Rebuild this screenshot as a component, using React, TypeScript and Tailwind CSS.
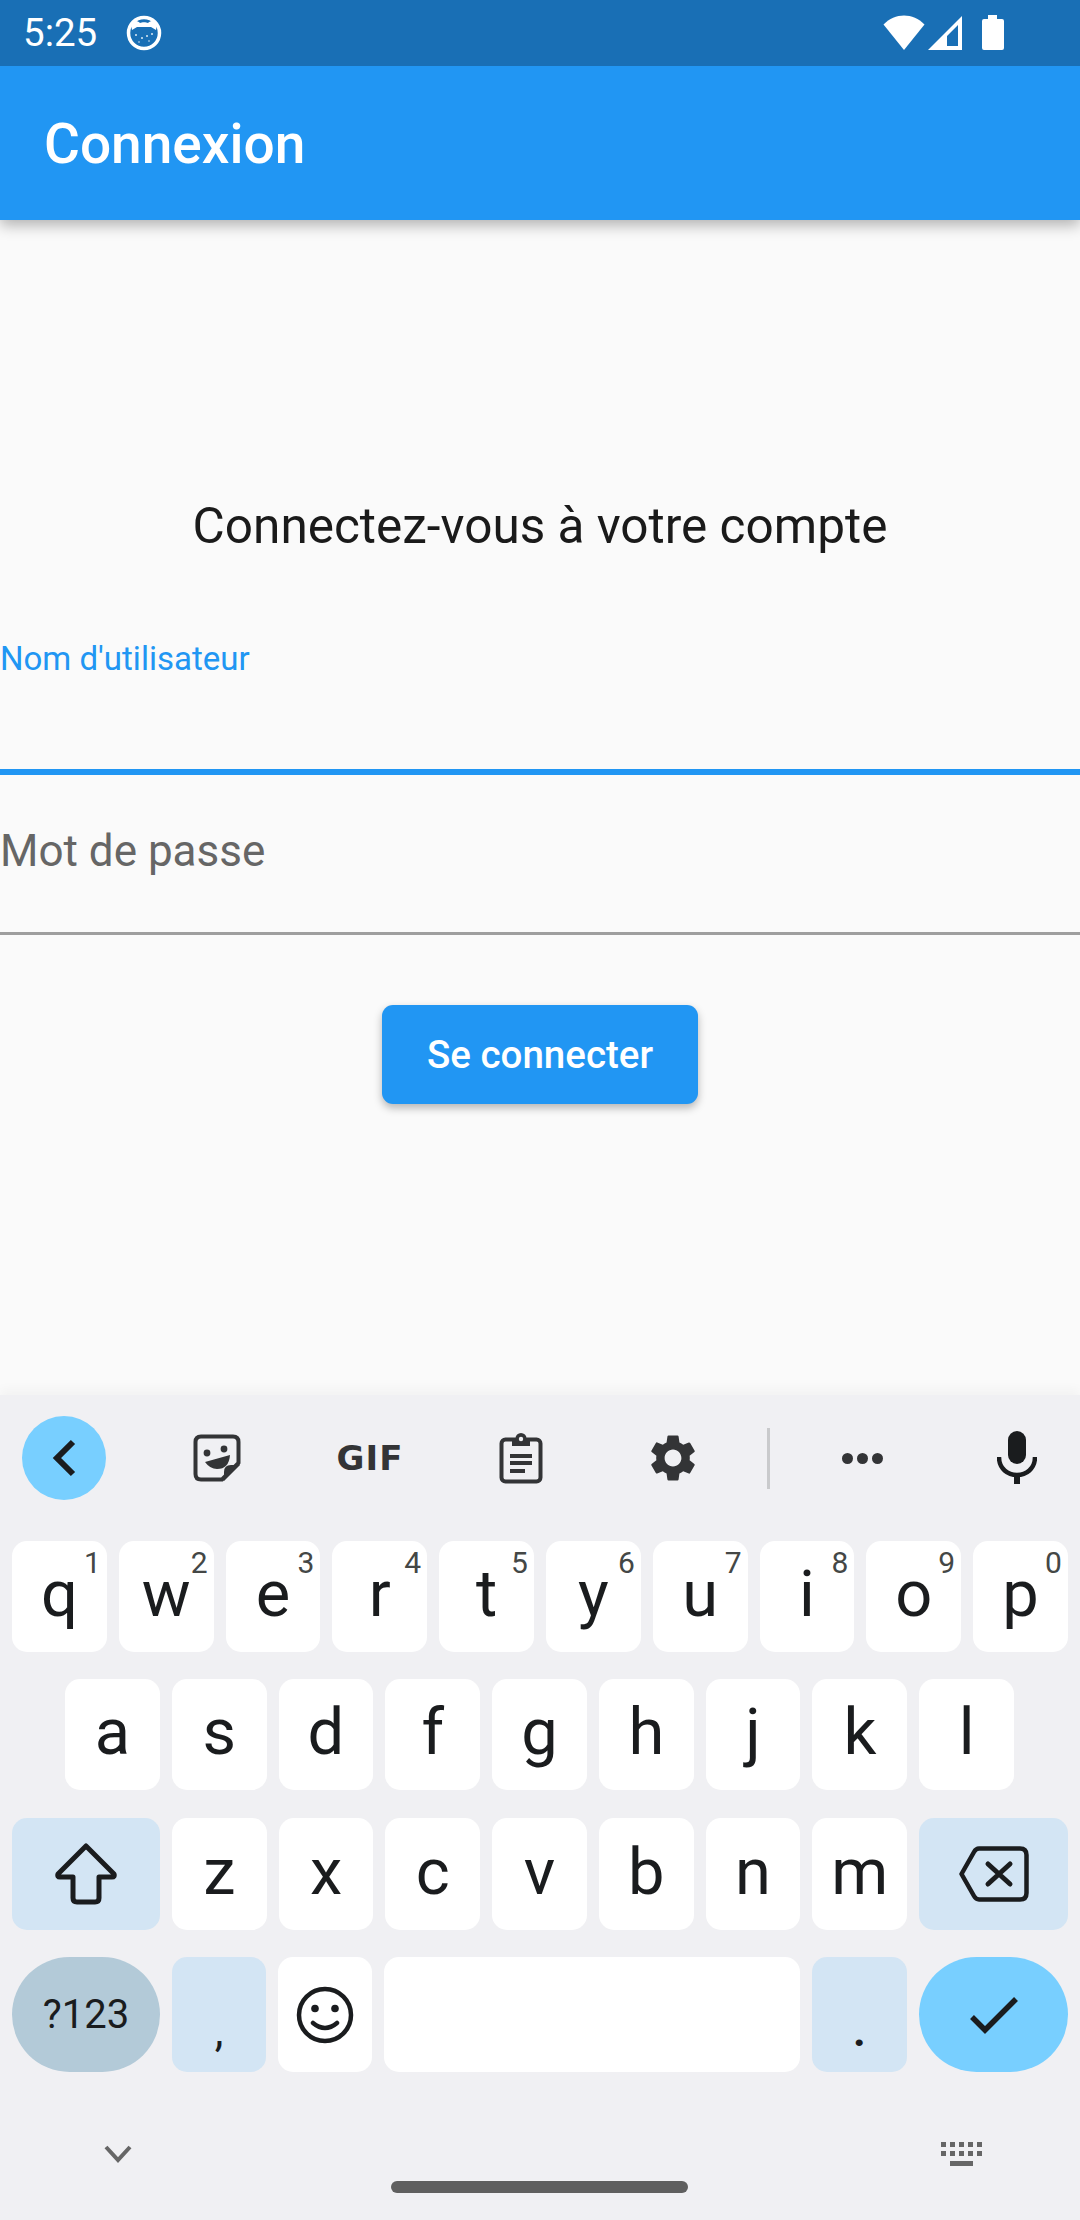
import React from "react";

const font = { fontFamily: "Roboto, sans-serif" };

function Key({ label, sup, className = "" }: { label?: string; sup?: string; className?: string }) {
  return (
    <div className={`relative flex-1 h-full rounded-[15px] bg-white flex items-center justify-center text-[65px] leading-none text-[#1a1c1e] ${className}`}>
      <span className="relative -top-[2px]">{label}</span>
      {sup && <span className="absolute right-[6px] top-[6px] text-[30px] leading-[32px] text-[#444746]">{sup}</span>}
    </div>
  );
}

function CatIcon() {
  return (
    <svg width="36" height="36" viewBox="0 0 36 36">
      <circle cx="18" cy="18" r="15.5" fill="none" stroke="#fff" strokeWidth="3.5" />
      <path d="M5 10 C9 4 12 6 14 8 C16 7 20 7 22 8 C24 6 27 4 31 10 L30 15 L25 12 L11 12 L6 15 Z" fill="#fff" />
      <g fill="#fff" opacity="0.85">
        <circle cx="10" cy="20" r="1" /><circle cx="16" cy="23" r="1" /><circle cx="21" cy="21" r="1" />
        <circle cx="26" cy="19" r="1" /><circle cx="13" cy="27" r="0.8" /><circle cx="23" cy="26" r="0.8" />
      </g>
    </svg>
  );
}

function StatusIcons() {
  return (
    <div className="flex items-center gap-[3px] mr-[76px]">
      <svg width="42" height="36" viewBox="0 0 42 36">
        <path d="M0.5 9.5 C12 -2.5 30 -2.5 41.5 9.5 L21 35 Z" fill="#fff" />
      </svg>
      <svg width="35" height="36" viewBox="0 0 35 36" className="mr-[16px]">
        <path fillRule="evenodd" d="M0 35 L34 1 V35 Z M19 31 H30 V10 L19 21 Z" fill="#fff" />
      </svg>
      <svg width="22" height="36" viewBox="0 0 22 36">
        <path d="M6 0 H15 V4 H20 Q22 4 22 6 V33 Q22 35 20 35 H2 Q0 35 0 33 V6 Q0 4 2 4 H6 Z" fill="#fff" />
      </svg>
    </div>
  );
}

function Sticker() {
  return (
    <svg width="48" height="48" viewBox="0 0 48 48" className="text-[#333436]">
      <path d="M29 45.5 H8 Q2.5 45.5 2.5 40 V8 Q2.5 2.5 8 2.5 H40 Q45.5 2.5 45.5 8 V29 Z" fill="none" stroke="currentColor" strokeWidth="4" strokeLinejoin="round" />
      <path d="M47 31 L31 47 V38 Q31 31 38 31 Z" fill="currentColor" />
      <circle cx="14" cy="19" r="3.4" fill="currentColor" />
      <circle cx="31" cy="15" r="3.4" fill="currentColor" />
      <path d="M12 28 L37 21 Q36 35 24 35 Q17 35 12 28 Z" fill="currentColor" />
    </svg>
  );
}

function Clipboard() {
  return (
    <svg width="44" height="52" viewBox="0 0 44 52" className="text-[#333436]">
      <rect x="2.5" y="7.5" width="39" height="42" rx="4" fill="none" stroke="currentColor" strokeWidth="4" />
      <path d="M13 9 H31 V14 H13 Z" fill="currentColor" />
      <circle cx="22" cy="6.5" r="5.5" fill="currentColor" />
      <circle cx="22" cy="7" r="2.2" fill="#f0f0f3" />
      <path d="M11 22 H33 V26 H11 Z M11 29 H33 V33 H11 Z M11 37 H26 V41 H11 Z" fill="currentColor" />
    </svg>
  );
}

function Gear() {
  return (
    <svg width="56" height="56" viewBox="0 0 24 24" fill="#333436">
      <path d="M19.14 12.94c.04-.3.06-.61.06-.94 0-.32-.02-.64-.07-.94l2.03-1.58c.18-.14.23-.41.12-.61l-1.92-3.32c-.12-.22-.37-.29-.59-.22l-2.39.96c-.5-.38-1.03-.7-1.62-.94l-.36-2.54c-.04-.24-.24-.41-.48-.41h-3.84c-.24 0-.43.17-.47.41l-.36 2.54c-.59.24-1.13.57-1.62.94l-2.39-.96c-.22-.08-.47 0-.59.22L2.74 8.87c-.12.21-.08.47.12.61l2.03 1.58c-.05.3-.09.63-.09.94s.02.64.07.94l-2.03 1.58c-.18.14-.23.41-.12.61l1.92 3.32c.12.22.37.29.59.22l2.39-.96c.5.38 1.03.7 1.62.94l.36 2.54c.05.24.24.41.48.41h3.84c.24 0 .44-.17.47-.41l.36-2.54c.59-.24 1.13-.56 1.62-.94l2.39.96c.22.08.47 0 .59-.22l1.92-3.32c.12-.22.07-.47-.12-.61l-2.01-1.58zM12 15.6c-1.98 0-3.6-1.62-3.6-3.6s1.62-3.6 3.6-3.6 3.6 1.62 3.6 3.6-1.62 3.6-3.6 3.6z" />
    </svg>
  );
}

function Mic() {
  return (
    <svg width="40" height="54" viewBox="0 0 40 54" fill="none">
      <rect x="11" y="0" width="18" height="33" rx="9" fill="#1a1c1e" />
      <path d="M2 26 C2 50 38 50 38 26" stroke="#1a1c1e" strokeWidth="4.5" />
      <path d="M20 42 V53" stroke="#1a1c1e" strokeWidth="6" />
    </svg>
  );
}

function Shift() {
  return (
    <svg width="64" height="62" viewBox="0 0 64 62" fill="none">
      <path d="M32 3 L60 31 Q61 34 58 34 H45 V55 Q45 59 41 59 H23 Q19 59 19 55 V34 H6 Q3 34 4 31 Z" stroke="#1a1c1e" strokeWidth="5" strokeLinejoin="round" />
    </svg>
  );
}

function Backspace() {
  return (
    <svg width="70" height="56" viewBox="0 0 70 56" fill="none">
      <path d="M20 2.5 H61 Q67.5 2.5 67.5 9 V47 Q67.5 53.5 61 53.5 H20 Q17 53.5 15 50 L2.5 28 L15 6 Q17 2.5 20 2.5 Z" stroke="#1a1c1e" strokeWidth="4.5" strokeLinejoin="round" />
      <path d="M29 18 L51 38 M51 18 L29 38" stroke="#1a1c1e" strokeWidth="5" strokeLinecap="round" />
    </svg>
  );
}

function Smile() {
  return (
    <svg width="58" height="58" viewBox="0 0 58 58" fill="none">
      <circle cx="29" cy="29" r="26" stroke="#1a1c1e" strokeWidth="4.5" />
      <circle cx="19" cy="22.5" r="3.8" fill="#1a1c1e" />
      <circle cx="39" cy="22.5" r="3.8" fill="#1a1c1e" />
      <path d="M17 37 Q29 47 41 37" stroke="#1a1c1e" strokeWidth="4.5" strokeLinecap="round" />
    </svg>
  );
}

function KeyboardGlyph() {
  return (
    <svg width="42" height="26" viewBox="0 0 42 24" fill="#666">
      <path d="M0 0h5v5H0zM9 0h5v5H9zM18 0h5v5h-5zM27 0h5v5h-5zM36 0h5v5h-5zM0 9h5v5H0zM9 9h5v5H9zM18 9h5v5h-5zM27 9h5v5h-5zM36 9h5v5h-5zM9 19h23v5H9z" />
    </svg>
  );
}

export default function App() {
  return (
    <div className="w-[1080px] h-[2220px] flex flex-col overflow-hidden bg-[#fafafa]" style={font}>
      <div className="h-[66px] shrink-0 bg-[#196fb5] flex items-center justify-between pl-[23px] pr-0 relative z-20">
        <div className="flex items-center">
          <span className="text-[38.5px] leading-none text-white">5:25</span>
          <span className="ml-[29px] flex"><CatIcon /></span>
        </div>
        <StatusIcons />
      </div>

      <header className="h-[154px] shrink-0 bg-[#2196f3] flex items-center pl-[44px] relative z-10 shadow-[0_5px_14px_rgba(0,0,0,0.3)]">
        <h1 className="text-[55px] font-medium leading-none text-white relative top-[1px]">Connexion</h1>
      </header>

      <main className="h-[1175px] shrink-0 flex flex-col">
        <p className="mt-[277px] text-center text-[49.5px] leading-[58px] text-[#1a1a1a]">Connectez-vous à votre compte</p>
        <label className="mt-[84px] text-[33px] leading-[40px] text-[#2196f3]">Nom d'utilisateur</label>
        <div className="mt-[90px] h-[6px] bg-[#2196f3]" />
        <label className="mt-[50px] text-[44px] leading-[52px] text-[#666666]">Mot de passe</label>
        <div className="mt-[55px] h-[3px] bg-[#9e9e9e]" />
        <button className="mt-[70px] self-center w-[316px] h-[99px] rounded-[11px] bg-[#2196f3] text-white text-[38.5px] font-medium shadow-[0_4px_8px_rgba(0,0,0,0.28)]">
          Se connecter
        </button>
      </main>

      <section className="flex-1 flex flex-col bg-[#f0f0f3] relative shadow-[0_-6px_10px_rgba(0,0,0,0.03)]">
        <div className="h-[146px] flex items-center pb-[20px] text-[#333436]">
          <div className="w-[128px] flex justify-center">
            <div className="w-[84px] h-[84px] rounded-full bg-[#78cfff] flex items-center justify-center">
              <svg width="26" height="38" viewBox="0 0 26 38" fill="none">
                <path d="M22 3 L6 19 L22 35" stroke="#1a1c1e" strokeWidth="6" />
              </svg>
            </div>
          </div>
          <div className="w-[48px] ml-[65px] flex justify-center"><Sticker /></div>
          <div className="w-[80px] ml-[89px] flex justify-center text-[34px] font-black leading-none tracking-[1px] text-[#333436]" style={{ fontFamily: "'DejaVu Sans', sans-serif" }}>GIF</div>
          <div className="w-[44px] ml-[89px] flex justify-center"><Clipboard /></div>
          <div className="w-[56px] ml-[102px] flex justify-center"><Gear /></div>
          <div className="w-[3px] h-[61px] ml-[66px] bg-[#c9cacc]" />
          <div className="ml-[72px] flex gap-[4px]">
            <span className="w-[11px] h-[11px] rounded-full bg-[#333436]" />
            <span className="w-[11px] h-[11px] rounded-full bg-[#333436]" />
            <span className="w-[11px] h-[11px] rounded-full bg-[#333436]" />
          </div>
          <div className="w-[40px] ml-[114px] flex justify-center"><Mic /></div>
        </div>

        <div className="flex flex-col">
          <div className="h-[111px] flex gap-[12px] px-[12px]">
            {[["q","1"],["w","2"],["e","3"],["r","4"],["t","5"],["y","6"],["u","7"],["i","8"],["o","9"],["p","0"]].map(([l,s]) => (
              <Key key={l} label={l} sup={s} />
            ))}
          </div>
          <div className="h-[111px] mt-[27px] flex gap-[12px] pl-[65px] pr-[66px]">
            {["a","s","d","f","g","h","j","k","l"].map((l) => <Key key={l} label={l} />)}
          </div>
          <div className="h-[112px] mt-[28px] flex gap-[12px] px-[12px]">
            <div className="w-[148px] h-full rounded-[15px] bg-[#d3e5f4] flex items-center justify-center"><Shift /></div>
            {["z","x","c","v","b","n","m"].map((l) => <Key key={l} label={l} />)}
            <div className="w-[149px] h-full rounded-[15px] bg-[#d3e5f4] flex items-center justify-center"><Backspace /></div>
          </div>
          <div className="h-[115px] mt-[27px] flex gap-[12px] px-[12px]">
            <div className="w-[148px] h-full rounded-[58px] bg-[#b3cad8] flex items-center justify-center text-[40px] text-[#1a1c1e]">?123</div>
            <div className="w-[94px] h-full rounded-[15px] bg-[#d3e5f4] flex justify-center text-[44px] leading-none text-[#1a1c1e] pt-[52px]">,</div>
            <div className="w-[94px] h-full rounded-[15px] bg-white flex items-center justify-center"><Smile /></div>
            <div className="flex-1 h-full rounded-[15px] bg-white" />
            <div className="w-[95px] h-full rounded-[15px] bg-[#d3e5f4] flex justify-center text-[44px] leading-none text-[#1a1c1e] pt-[52px] font-bold">.</div>
            <div className="w-[149px] h-full rounded-[58px] bg-[#78cfff] flex items-center justify-center">
              <svg width="50" height="38" viewBox="0 0 50 38" fill="none">
                <path d="M3 21 L16 34 L47 3" stroke="#1a1c1e" strokeWidth="5.5" />
              </svg>
            </div>
          </div>
        </div>

        <div className="relative flex-1 flex justify-between items-start pt-[73px]">
          <svg width="28" height="18" viewBox="0 0 28 18" fill="none" className="ml-[104px]">
            <path d="M2 2 L14 15 L26 2" stroke="#666" strokeWidth="4" />
          </svg>
          <span className="mr-[97px] relative -top-[4px]"><KeyboardGlyph /></span>
          <div className="absolute left-[391px] top-[109px] w-[297px] h-[12px] rounded-full bg-[#5f5f5f]" />
        </div>
      </section>
    </div>
  );
}
